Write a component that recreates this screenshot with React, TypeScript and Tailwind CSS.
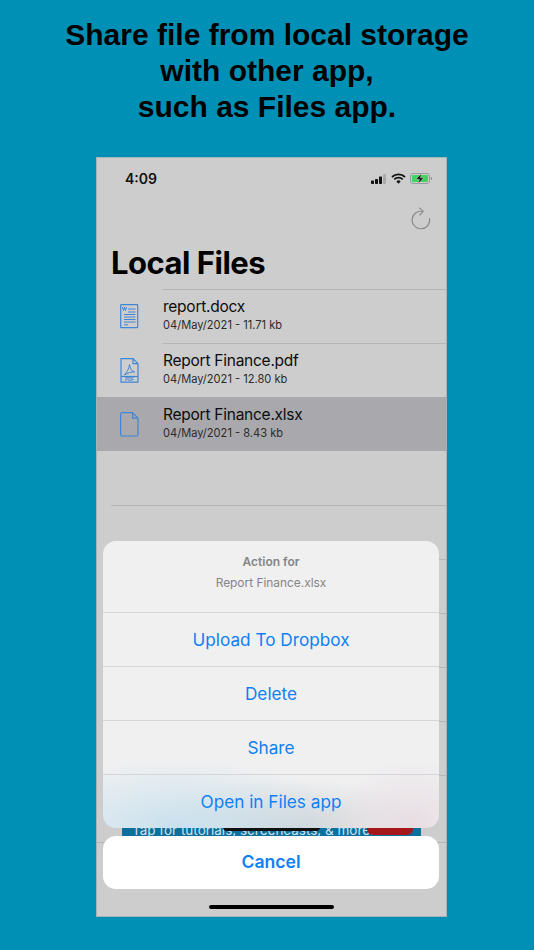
import React from "react";

const SF = "font-['Inter','Liberation_Sans',sans-serif]";

function DocIcon({ kind }: { kind: "word" | "pdf" | "file" }) {
  return (
    <svg width="19" height="25" viewBox="0 0 19 25" fill="none" stroke="#3f86d6" strokeWidth="1.200">
      {kind === "word" && (
        <>
          <rect x=".7" y=".7" width="17" height="23" rx=".6" />
          <path d="M2.500 3l1 3.500 1-3.500 1 3.500 1-3.500" strokeWidth="1" />
          <path d="M8 5h7.500M8 8h7.500M4 10.500h11.500M4 13h11.500M4 15.500h11.500M4 18h11.500M4 20.800h4" strokeWidth="1" />
        </>
      )}
      {kind === "pdf" && (
        <>
          <path d="M1 .7h12l5 5v18.500H1V.7ZM13 .7v5h5" />
          <path d="M9.500 6.500c-.5 4-2.500 8-5 10.500 3-2 7-3.500 10-3-3-1-4.500-4-5-7.500Z" strokeWidth="1" />
          <path d="M1 18.500h17" />
          <text x="9.500" y="23.200" textAnchor="middle" fontSize="4.500" fontWeight="700" fill="#3f86d6" stroke="none" fontFamily="Liberation Sans, sans-serif">PDF</text>
        </>
      )}
      {kind === "file" && (
        <path d="M2 .7h10.500l5.500 5.500v16.400a1.400 1.400 0 0 1-1.400 1.400H2a1.400 1.400 0 0 1-1.400-1.400V2.100A1.400 1.400 0 0 1 2 .7ZM12.500 .7v5.500H18" />
      )}
    </svg>
  );
}

function Row({ name, meta, kind, selected }: { name: string; meta: string; kind: "word" | "pdf" | "file"; selected?: boolean }) {
  return (
    <div className={`flex h-[54px] items-center ${selected ? "bg-[#a9a8ad]" : ""}`}>
      <div className="flex w-[66px] shrink-0 pl-[23px]">
        <DocIcon kind={kind} />
      </div>
      <div className={`flex h-full flex-1 flex-col justify-center border-t pb-[4px] ${selected ? "border-transparent" : "border-[#b5b5b5]"}`}>
        <div className="text-[15.500px] leading-[20px] tracking-[-0.25px] text-[#0c0c0c]">{name}</div>
        <div className="mt-[1px] text-[11.100px] leading-[14px] text-[#2b2b2b]">{meta}</div>
      </div>
    </div>
  );
}

function Action({ label }: { label: string }) {
  return (
    <div className="flex h-[54px] items-center justify-center border-t border-[#d6d6d8] text-[17.200px] text-[#0f80f5]">{label}</div>
  );
}

export default function App() {
  return (
    <div className={`flex h-[950px] w-[534px] flex-col overflow-hidden bg-[#0190b5] ${SF}`}>
      <h1 className="mt-[17px] h-[123px] w-full text-center font-['Liberation_Sans',sans-serif] text-[30px] font-bold leading-[36px] text-black">
        Share file from local storage
        <br />
        with other app,
        <br />
        such as Files app.
      </h1>

      <div className="relative ml-[96px] mt-[17px] h-[760px] w-[351px] overflow-hidden border border-[#a6b2b6] bg-[#cdcdcd]">
        <div className="flex h-[41px] items-center justify-between pl-[28px] pr-[14px]">
          <span className="text-[14px] font-semibold text-[#111]">4:09</span>
          <div className="flex items-center gap-[4px]">
            <svg width="16" height="10" viewBox="0 0 16 10" fill="#111">
              <rect x="0" y="6.500" width="3" height="3.500" rx=".7" />
              <rect x="4" y="5" width="3" height="5" rx=".7" />
              <rect x="8" y="2.500" width="3" height="7.500" rx=".7" />
              <rect x="12" y="0" width="3" height="10" rx=".7" fill="#a9a9a9" />
            </svg>
            <svg width="15" height="11" viewBox="0 0 15 11" fill="none" stroke="#111" strokeWidth="1.800">
              <path d="M1 4a9.300 9.300 0 0 1 13 0M3.300 6.400a6 6 0 0 1 8.400 0" />
              <path d="M7.500 10.800 5.400 8.400a3 3 0 0 1 4.200 0Z" fill="#111" stroke="none" />
            </svg>
            <svg width="22" height="11" viewBox="0 0 22 11" fill="none">
              <rect x=".5" y=".5" width="19" height="10" rx="2.500" stroke="#9a9a9a" />
              <rect x="2" y="2" width="16" height="7" rx="1.200" fill="#3fd35f" />
              <path d="M20.800 4v3a1.500 1.500 0 0 0 0-3Z" fill="#8d8d8d" />
              <path d="M11.500 .5 6 6.300h3.400L8.300 10.500 13.800 4.700h-3.400Z" fill="#111" stroke="#cdcdcd" strokeWidth=".5" />
            </svg>
          </div>
        </div>

        <div className="flex h-[38px] justify-end pr-[15px] pt-[8px]">
          <svg width="20" height="24" viewBox="0 0 20 24" fill="none" stroke="#8a8a8a" strokeWidth="1.100">
            <path d="M11.300 4.300A8.800 8.800 0 1 0 18.500 11" />
            <path d="M8 .6l4.300 3.600-3.700 4.200" />
          </svg>
        </div>

        <div className="flex h-[52px] items-center pb-[1px] pl-[14px] text-[31px] font-bold leading-[38px] tracking-[-0.5px] text-black">
          Local Files
        </div>

        <Row kind="word" name="report.docx" meta="04/May/2021 - 11.71 kb" />
        <Row kind="pdf" name="Report Finance.pdf" meta="04/May/2021 - 12.80 kb" />
        <Row kind="file" name="Report Finance.xlsx" meta="04/May/2021 - 8.43 kb" selected />

        <div className="ml-[14px]">
          <div className="h-[54px]" />
          {Array.from({ length: 6 }).map((_, i) => (
            <div key={i} className="h-[54px] border-t border-[#b5b5b5]" />
          ))}
        </div>

        {/* Content seen through the sheet's gap */}
        <div className="absolute left-[25px] top-[669px] flex h-[16px] w-[299px] items-start overflow-hidden bg-[#0d6f9c] pl-[10px]">
          <span className="-mt-[6px] whitespace-nowrap text-[13.500px] leading-[18px] text-[#cfe3ee]">Tap for tutorials, screencasts, &amp; more.</span>
          <div className="absolute right-[8px] top-0 h-[8px] w-[46px] rounded-b-[6px] bg-[#a5171b]" />
        </div>
        <div className="absolute left-[126px] top-[669px] h-[4px] w-[97px] rounded-b-full bg-[#111]" />
        <div className="absolute inset-x-0 top-[684px] h-px bg-[#b5b5b5]" />

        {/* Action sheet */}
        <div className="absolute left-[6px] top-[383px] w-[336px]">
          <div className="overflow-hidden rounded-[13px] bg-[#f0f0f1] bg-[radial-gradient(ellipse_170px_70px_at_22%_100%,#c9e1ee,transparent),radial-gradient(ellipse_80px_70px_at_92%_100%,#e8dde2,transparent),radial-gradient(ellipse_150px_50px_at_55%_100%,#cfd3d6,transparent)]">
            <div className="flex h-[71px] flex-col items-center pt-[13px] text-[#858585]">
              <div className="text-[12px] font-semibold leading-[16px]">Action for</div>
              <div className="mt-[5px] text-[11.900px] leading-[16px]">Report Finance.xlsx</div>
            </div>
            <Action label="Upload To Dropbox" />
            <Action label="Delete" />
            <Action label="Share" />
            <Action label="Open in Files app" />
          </div>
          <div className="mt-[8px] flex h-[53px] items-center justify-center rounded-[13px] bg-white text-[17.600px] font-semibold text-[#0f80f5]">
            Cancel
          </div>
        </div>

        <div className="absolute bottom-[7px] left-[112px] h-[4px] w-[125px] rounded-full bg-black" />
      </div>
    </div>
  );
}
